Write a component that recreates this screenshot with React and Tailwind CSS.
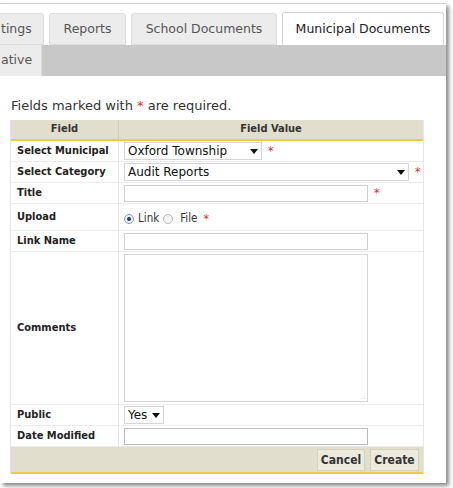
import React from "react";

const font = { fontFamily: '"DejaVu Sans Condensed", "DejaVu Sans", Verdana, sans-serif' };
const wide = { fontFamily: '"DejaVu Sans", Verdana, sans-serif' };

const Star = () => <span className="text-[#e0243c] ml-[6px] text-[12px]">*</span>;

const Row = ({ label, h = "h-[21px]", children }) => (
	<div className={`flex border-b border-[#ececec] ${h}`}>
		<div className="w-[108px] shrink-0 flex items-center pl-[6px] font-bold text-[11px] text-[#222] border-r border-[#e6e6e6]">
			{label}
		</div>
		<div className="flex-1 flex items-center pl-[5px]">{children}</div>
	</div>
);

const Caret = () => (
	<svg width="8" height="5" viewBox="0 0 8 5" className="ml-auto">
		<path d="M0 0h8L4 5z" fill="#111" />
	</svg>
);

export default function App() {
	return (
		<div className="w-[453px] h-[488px] bg-white relative overflow-hidden" style={font}>
			<div className="w-[446px] h-[480px] bg-white border-t border-[#cfcfcf] mt-[3px] shadow-[3px_3px_4px_rgba(0,0,0,0.45)] flex flex-col">
				{/* tab rows */}
				<div className="flex items-end gap-[5px] pt-[8px] h-[41px] text-[12.5px]" style={wide}>
					<div className="w-[44px] h-[32px] bg-[#ececec] border border-l-0 border-[#dcdcdc] rounded-tr-[3px] flex items-center pl-[1px] text-[#555]">
						tings
					</div>
					<div className="w-[77px] h-[32px] bg-[#ececec] border border-[#dcdcdc] rounded-t-[3px] flex items-center justify-center text-[#555]">
						Reports
					</div>
					<div className="w-[146px] h-[32px] bg-[#ececec] border border-[#dcdcdc] rounded-t-[3px] flex items-center justify-center text-[#555]">
						School Documents
					</div>
					<div className="w-[162px] h-[33px] bg-white border border-b-0 border-[#d4d4d4] rounded-t-[3px] flex items-center justify-center text-[#222]">
						Municipal Documents
					</div>
				</div>
				<div className="h-[31px] bg-[#c8c8c8] flex items-end text-[12.5px]" style={wide}>
					<div className="w-[42px] h-[31px] bg-[#ececec] border-r border-[#dcdcdc] flex items-center pl-[1px] text-[#555]">
						ative
					</div>
				</div>

				<div className="pl-[11px] pt-[20px] text-[13px] text-[#333] h-[44px]" style={wide}>
					Fields marked with <span className="text-[#e0243c]">*</span> are required.
				</div>

				{/* table */}
				<div className="ml-[10px] w-[414px] border-l border-[#e6e6e6] border-r">
					<div className="flex h-[21px] bg-[#e2dece] border-b-2 border-[#f2c94c] text-[11px] font-bold text-[#333]">
						<div className="w-[108px] flex items-center justify-center border-r border-[#d0ccbc]">Field</div>
						<div className="flex-1 flex items-center justify-center">Field Value</div>
					</div>
					<Row label="Select Municipal">
						<div className="w-[138px] h-[18px] border border-[#d6d6d6] flex items-center px-[3px] text-[12px] text-[#111]" style={wide}>
							Oxford Township
							<Caret />
						</div>
						<Star />
					</Row>
					<Row label="Select Category">
						<div className="w-[285px] h-[18px] border border-[#d6d6d6] flex items-center px-[3px] text-[12px] text-[#111]" style={wide}>
							Audit Reports
							<Caret />
						</div>
						<Star />
					</Row>
					<Row label="Title">
						<div className="w-[244px] h-[17px] border border-[#cfcfcf]" />
						<Star />
					</Row>
					<Row label="Upload" h="h-[27px]">
						<div className="flex items-center pt-[4px] text-[11.5px] text-[#333]">
							<span className="w-[10px] h-[10px] rounded-full border border-[#8a99b0] bg-[#eef2f8] flex items-center justify-center">
								<span className="w-[4px] h-[4px] rounded-full bg-[#1d3c74]" />
							</span>
							<span className="ml-[4px]">Link</span>
							<span className="ml-[4px] w-[10px] h-[10px] rounded-full border border-[#b5b5b5] bg-[#f2f2f2]" />
							<span className="ml-[7px]">File</span>
							<Star />
						</div>
					</Row>
					<Row label="Link Name">
						<div className="w-[244px] h-[17px] border border-[#cfcfcf]" />
					</Row>
					<Row label="Comments" h="h-[153px]">
						<div className="w-[244px] h-[148px] border border-[#d6d6d6] relative">
							<span className="absolute right-[2px] bottom-[1px] text-[6px] text-[#aaa] leading-none">.:</span>
						</div>
					</Row>
					<Row label="Public">
						<div className="w-[40px] h-[18px] border border-[#d6d6d6] flex items-center px-[3px] text-[12px] text-[#111]" style={wide}>
							Yes
							<Caret />
						</div>
					</Row>
					<Row label="Date Modified">
						<div className="w-[244px] h-[17px] border border-[#bdbdbd]" />
					</Row>
					<div className="h-[27px] bg-[#e2dece] border-b-2 border-[#f2c94c] flex items-center justify-end gap-[5px] pr-[4px]">
						<button className="w-[48px] h-[22px] bg-[#ece9dd] border border-[#d4d0c0] text-[12px] font-bold text-[#333]">Cancel</button>
						<button className="w-[49px] h-[22px] bg-[#ece9dd] border border-[#d4d0c0] text-[12px] font-bold text-[#333]">Create</button>
					</div>
				</div>
			</div>
		</div>
	);
}
